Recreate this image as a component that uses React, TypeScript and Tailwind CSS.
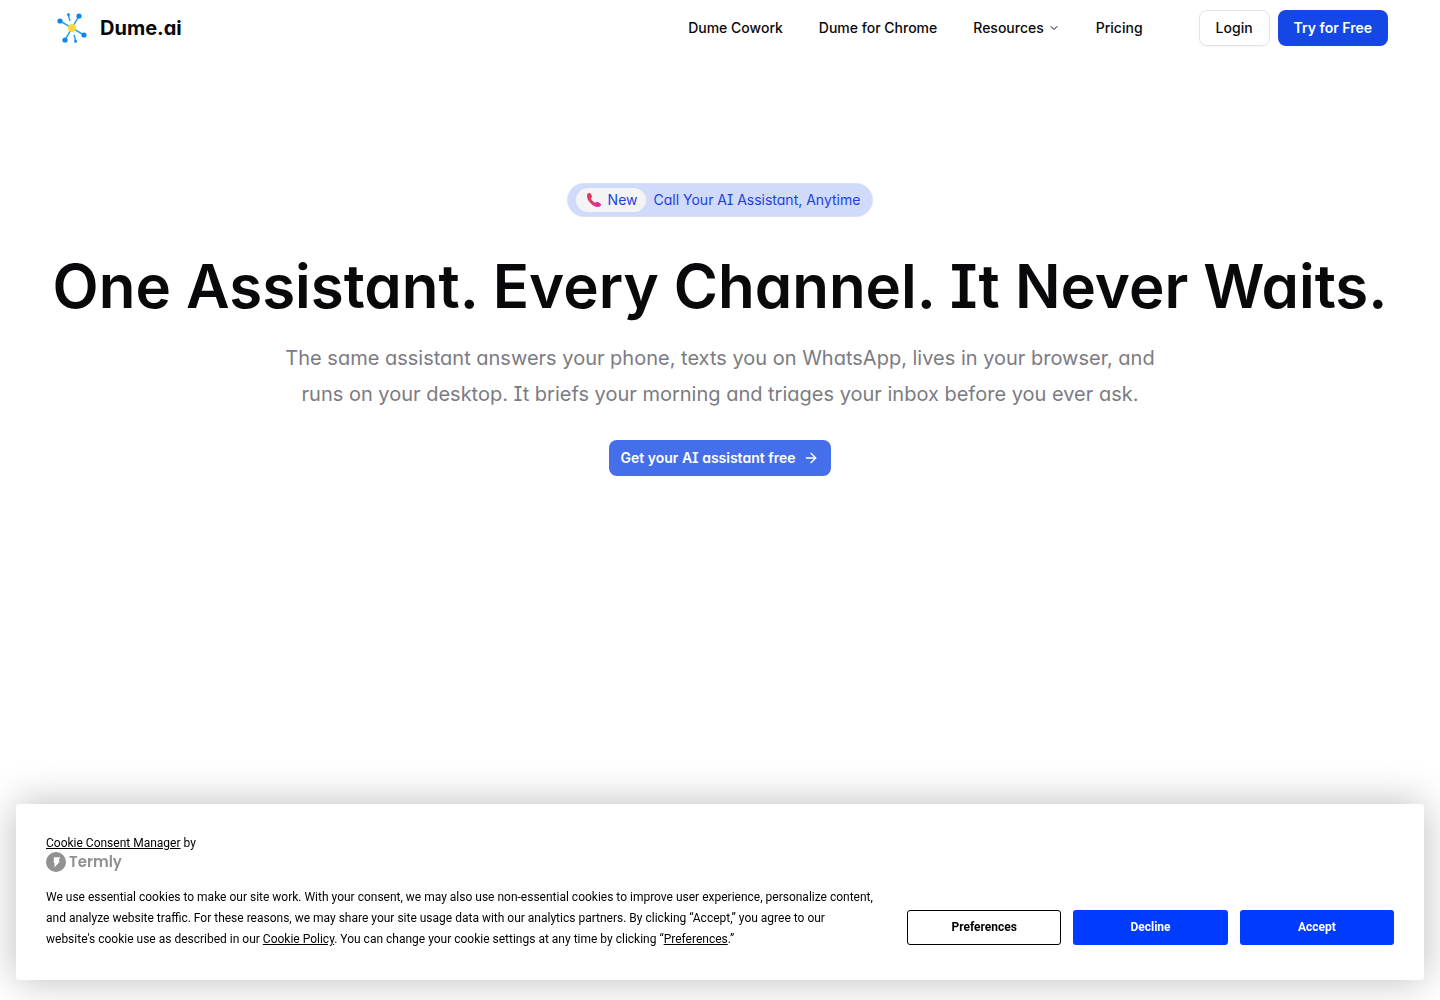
import { ArrowRight, ChevronDown } from 'lucide-react'

const navLinks = [
    { label: 'Dume Cowork', href: '#cowork' },
    { label: 'Dume for Chrome', href: '#chrome' },
    { label: 'Resources', href: '#resources', hasMenu: true },
    { label: 'Pricing', href: '#pricing' },
]

function DumeLogo() {
    return (
        <svg viewBox="0 0 32 32" className="h-8 w-8" aria-hidden="true">
            <g stroke="#2aa5ec" strokeWidth="1.5" strokeLinecap="round">
                <path d="M16 16 4 9M16 16 23 4M16 16 28 23M16 16 9 28" />
                <path d="M12.4 3 13.8 8.4M18.2 23.5 19.6 29" />
            </g>
            <g fill="#0d84ee">
                <circle cx="4" cy="9" r="2.6" />
                <circle cx="23" cy="4" r="2.6" />
                <circle cx="28" cy="23" r="2.6" />
                <circle cx="9" cy="28" r="2.6" />
                <circle cx="12.4" cy="2.6" r="1.4" />
                <circle cx="19.6" cy="29.4" r="1.4" />
            </g>
            <circle cx="16" cy="16" r="4" fill="#fdd835" />
        </svg>
    )
}

function PhoneIcon() {
    return (
        <svg viewBox="0 0 16 16" className="h-4 w-4" aria-hidden="true">
            <defs>
                <linearGradient id="handset" x1="0" y1="0" x2="1" y2="1">
                    <stop offset="0" stopColor="#e8394a" />
                    <stop offset="1" stopColor="#d62fa8" />
                </linearGradient>
            </defs>
            <path
                fill="url(#handset)"
                d="M1 3.2C1.2 1.7 2.7.7 3.8 1.1c1.1.4 2.2 2.7 2.2 3.6 0 .9-1.2 1.3-1 2.1.4 1.2 2.1 3.1 3.9 3.9.8.3 1.3-1 2.3-.9 1.1.1 3.4 1.5 3.8 2.5.4 1.2-1 2.5-2.4 2.7C7.6 15.7.4 8.4 1 3.2Z"
            />
        </svg>
    )
}

function TermlyLogo() {
    return (
        <a href="#termly" className="flex w-fit items-center gap-[3px] text-[#919191]">
            <svg viewBox="0 0 20 20" className="h-5 w-5" aria-hidden="true">
                <circle cx="10" cy="10" r="10" fill="#919191" />
                <path d="M7.8 5.3h6.4l-1.6 4H14l-5.500 6.300V11H7.800Z" fill="#fff" />
            </svg>
            <span className="font-[Poppins,Inter,sans-serif] text-[15px] leading-5 font-semibold">Termly</span>
        </a>
    )
}

function Header() {
    return (
        <header className="flex h-14 items-center justify-between px-13">
            <a href="#home" className="flex items-center gap-3 pl-1">
                <DumeLogo />
                <span className="text-xl font-bold [font-feature-settings:'cv11']">Dume.ai</span>
            </a>
            <div className="flex items-center gap-14">
                <nav className="flex items-center gap-9 text-sm font-medium">
                    {navLinks.map((link) => (
                        <a key={link.label} href={link.href} className="flex items-center gap-1">
                            {link.label}
                            {link.hasMenu && <ChevronDown className="h-3 w-3" />}
                        </a>
                    ))}
                </nav>
                <div className="flex items-center gap-2 text-sm">
                    <button className="h-9 rounded-lg border border-[#e4e4e7] px-4 font-medium shadow-xs">Login</button>
                    <button className="h-9 rounded-lg bg-[#1447e6] px-4 font-semibold text-white">Try for Free</button>
                </div>
            </div>
        </header>
    )
}

function Hero() {
    return (
        <main className="flex flex-col items-center pt-32 text-center [font-feature-settings:'cv08','cv11']">
            <a
                href="#call"
                className="flex h-8 items-center gap-2 rounded-full bg-[#d0dafa] pr-3 pl-2 text-sm text-[#1d3fe0] ring-1 ring-[#dbe1f5]"
            >
                <span className="flex h-6 items-center gap-1.5 rounded-full bg-[#f4f4f5] pr-2 pl-2.5">
                    <PhoneIcon />
                    New
                </span>
                Call Your AI Assistant, Anytime
            </a>
            <h1 className="mt-10 text-6xl leading-[60px] font-semibold text-[#09090b]">
                One Assistant. Every Channel. It Never Waits.
            </h1>
            <p className="mt-6 max-w-[896px] text-xl leading-9 text-[#7b7b83]">
                The same assistant answers your phone, texts you on WhatsApp, lives in your browser, and runs on your
                desktop. It briefs your morning and triages your inbox before you ever ask.
            </p>
            <button className="mt-7 flex h-9 items-center gap-2 rounded-lg bg-[#456eeb] px-3 text-sm font-semibold text-white">
                Get your AI assistant free
                <ArrowRight className="h-4 w-4" />
            </button>
        </main>
    )
}

function CookieBanner() {
    return (
        <section
            aria-label="Cookie consent"
            className="fixed inset-x-4 bottom-5 rounded bg-white p-[30px] font-[Roboto,sans-serif] text-xs leading-[21px] text-black shadow-[0_0_40px_rgba(0,0,0,0.27)]"
        >
            <div className="leading-[18px]">
                <a href="#consent" className="underline">
                    Cookie Consent Manager
                </a>{' '}
                by
            </div>
            <TermlyLogo />
            <div className="mt-[15px] flex items-end justify-between gap-6">
                <p className="max-w-[829px] flex-1">
                    We use essential cookies to make our site work. With your consent, we may also use non-essential
                    cookies to improve user experience, personalize content, and analyze website traffic. For these
                    reasons, we may share your site usage data with our analytics partners. By clicking “Accept,” you
                    agree to our website's cookie use as described in our{' '}
                    <a href="#policy" className="underline">
                        Cookie Policy
                    </a>
                    . You can change your cookie settings at any time by clicking “
                    <a href="#preferences" className="underline">
                        Preferences
                    </a>
                    .”
                </p>
                <div className="grid w-[487px] grid-cols-3 gap-3 pb-[5px] font-bold">
                    <button className="h-[35px] rounded-[3px] border border-black">Preferences</button>
                    <button className="h-[35px] rounded-[3px] bg-[#003cff] text-white">Decline</button>
                    <button className="h-[35px] rounded-[3px] bg-[#003cff] text-white">Accept</button>
                </div>
            </div>
        </section>
    )
}

export default function App() {
    return (
        <div className="min-h-screen bg-white font-[Inter,sans-serif] text-[#09090b]">
            <Header />
            <Hero />
            <CookieBanner />
        </div>
    )
}
